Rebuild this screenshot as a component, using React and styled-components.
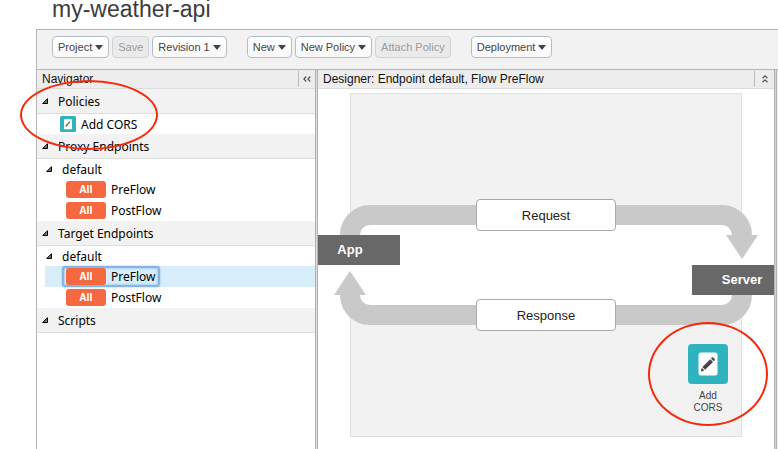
import React from 'react';
import styled, { createGlobalStyle, css } from 'styled-components';

const GlobalStyle = createGlobalStyle`
  * { box-sizing: border-box; }
  html, body, #root { height: 100%; }
  body {
    margin: 0;
    background: #fff;
    color: #000;
    font-family: "Liberation Sans", Arial, sans-serif;
    font-size: 12px;
    overflow: hidden;
  }
  button { margin: 0; font: inherit; color: inherit; cursor: pointer; }
  ul { margin: 0; padding: 0; list-style: none; }
`;

const Page = styled.div`
  position: relative;
  display: flex;
  flex-direction: column;
  min-height: 100%;
`;

const Title = styled.h1`
  margin: 0;
  height: 29px;
  padding-left: 52px;
  font-size: 23px;
  font-weight: 400;
  line-height: 18px;
  color: #3c3c3c;
`;

const Editor = styled.main`
  flex: 1;
  display: flex;
  flex-direction: column;
  margin-left: 36px;
  border-top: 1px solid #b5b5b5;
  border-left: 1px solid #b5b5b5;
`;

const Toolbar = styled.div`
  display: flex;
  gap: 20px;
  height: 40px;
  padding: 6px 15px;
  background: #f2f2f2;
  border-bottom: 1px solid #b5b5b5;
`;

const ButtonGroup = styled.div`
  display: flex;
  align-items: flex-start;
  gap: 3px;
`;

const ToolButton = styled.button`
  display: flex;
  align-items: center;
  gap: 3px;
  height: 22px;
  padding: 0 5px;
  white-space: nowrap;
  font-size: 11px;
  color: #444;
  background: linear-gradient(#fff, #f8f8f8);
  border: 1px solid #b3bfc6;
  border-radius: 4px;

  &:disabled {
    color: #9b9b9b;
    background: #eaeaea;
    border-color: #cdd3d6;
    cursor: default;
  }
`;

const Panels = styled.div`
  flex: 1;
  display: flex;
`;

const Panel = styled.section`
  display: flex;
  flex-direction: column;
  background: #fff;
  ${(p) => (p.$side ? css`flex: 0 0 278px;` : css`flex: 1; min-width: 0;`)}
`;

const Splitter = styled.div`
  flex: 0 0 3px;
  background: ${(p) => (p.$accent ? '#cfe0ae' : '#dedede')};
  border: solid #b0b0b0;
  border-width: 0 1px;
`;

const EdgePanel = styled.div`
  flex: 0 0 1px;
  background: #f2f2f2;
`;

const PanelHeader = styled.header`
  display: flex;
  align-items: center;
  height: 19px;
  padding-left: 5px;
  background: #ededed;
  border-bottom: 1px solid #dcdcdc;
`;

const PanelTitle = styled.h2`
  flex: 1;
  margin: 0;
  font-size: 12px;
  line-height: 16px;
  font-weight: 400;
  color: #111;
  white-space: nowrap;
`;

const CollapseButton = styled.button`
  display: flex;
  align-items: center;
  justify-content: center;
  width: ${(p) => (p.$wide ? '20px' : '17px')};
  height: 16px;
  padding: 0;
  color: #555;
  background: none;
  border: 0;
  border-left: 1px solid #b3bfc6;
`;

const Tree = styled.div`
  font-family: "Noto Sans", "Open Sans", sans-serif;
  font-size: 12px;
  line-height: 16px;
`;

const TreeLabel = styled.span`
  padding-top: 2px;
`;

const SectionToggle = styled.button`
  display: flex;
  align-items: center;
  gap: 10px;
  width: 100%;
  height: 25px;
  padding: 0 5px;
  background: #f2f2f2;
  border: 0;
  border-bottom: 1px solid #dfdfdf;
`;

const EndpointToggle = styled.button`
  display: flex;
  align-items: center;
  gap: 10px;
  width: 100%;
  height: 20px;
  padding: 0 9px;
  background: none;
  border: 0;
`;

const PolicyRow = styled.button`
  display: flex;
  align-items: center;
  gap: 5px;
  width: 100%;
  height: 20px;
  padding: 0 23px;
  background: none;
  border: 0;
`;

const FlowRow = styled.li`
  display: flex;
  align-items: center;
  height: 21px;
  margin-left: 8px;
  padding-left: 17px;
  background: ${(p) => (p.$selected ? '#d7eefa' : 'transparent')};
`;

const FlowButton = styled.button`
  display: flex;
  align-items: center;
  gap: 5px;
  height: 21px;
  padding: 0 2px;
  background: none;
  border: 2px solid transparent;
  border-radius: 3px;
  ${(p) => p.$selected && css`
    border-color: #86b5e4;
    box-shadow: 0 0 2px #86b5e4, inset 0 0 3px #86b5e4;
  `}
`;

const Badge = styled.span`
  width: 40px;
  height: 17px;
  border-radius: 3px;
  background: #f56840;
  color: #fff;
  font-size: 10px;
  font-weight: 700;
  line-height: 17px;
  text-align: center;
`;

const Designer = styled.div`
  position: relative;
  flex: 1;
  padding: 4px 32px 12px;
`;

const Canvas = styled.div`
  height: 344px;
  background: #f2f2f2;
  border: 1px solid #dfdfdf;
`;

const Loop = styled.div`
  position: absolute;
  top: 116px;
  left: 22px;
  right: 22px;
  height: 120px;
  background: #fff;
  border: 20px solid #c9c9c9;
  border-radius: 30px;
`;

const ArrowHead = styled.svg`
  position: absolute;
  top: 146px;
  width: 32px;
  height: 60px;
  background: linear-gradient(#fff, #fff) no-repeat;
  background-size: 32px 30px;
  ${(p) => (p.$end ? css`right: 16px;` : css`left: 16px; background-position: 0 30px;`)}
`;

const Terminal = styled.div`
  position: absolute;
  width: 82px;
  height: 30px;
  background: #686868;
  color: #fff;
  font-size: 13px;
  font-weight: 700;
  line-height: 30px;
  text-align: center;
  ${(p) => (p.$end
    ? css`top: 176px; right: 0; padding-left: 18px;`
    : css`top: 146px; left: 0; padding-right: 18px;`)}
`;

const Stage = styled.button`
  position: absolute;
  top: ${(p) => (p.$response ? '210px' : '110px')};
  left: calc(50% - 70px);
  width: 140px;
  height: 32px;
  padding: 0;
  background: #fff;
  border: 1px solid #a9a9a9;
  border-radius: 4px;
  color: #222;
  font-size: 13px;
`;

const PolicyNode = styled.button`
  position: absolute;
  top: 255px;
  right: 46px;
  display: flex;
  flex-direction: column;
  align-items: center;
  gap: 6px;
  width: 40px;
  padding: 0;
  background: none;
  border: 0;
  color: #444;
  font-size: 10px;
  line-height: 12px;
`;

const Callout = styled.div`
  position: absolute;
  border: 2px solid #f32b0c;
  border-radius: 50%;
  pointer-events: none;
  ${(p) => (p.$policies
    ? css`top: 80px; left: 20px; width: 138px; height: 70px;`
    : css`top: 322px; right: 10px; width: 120px; height: 104px;`)}
`;

const Caret = () => (
  <svg width="8" height="5" viewBox="0 0 8 5" aria-hidden="true">
    <path d="M0 0H8L4 5Z" fill="#444" />
  </svg>
);

const Twisty = () => (
  <svg width="6" height="6" viewBox="0 0 6 6" aria-hidden="true">
    <path d="M5.5 0.7V5.5H0.7Z" fill="#777" stroke="#000" />
  </svg>
);

const PolicyIcon = ({ size, small }) => (
  <svg width={size} height={size} viewBox="0 0 40 40" aria-hidden="true">
    <rect width="40" height="40" rx="4" fill="#2fb3bf" />
    {small ? (
      <>
        <rect x="10" y="8" width="20" height="25" rx="2" fill="#fff" />
        <path d="M14 26L25 14" stroke="#555" strokeWidth="3" />
      </>
    ) : (
      <>
        <rect x="10.5" y="8.5" width="19" height="23" rx="2.5" fill="#fff" />
        <g fill="#444">
          <path d="M12.8 27.4L13.8 23.8L16.4 26.4Z" />
          <path d="M14.4 23.1L22.3 15.2L25 17.9L17.1 25.8Z" />
          <path d="M23 14.5L24 13.5Q24.7 13 25.3 13.5L26.7 14.9Q27.2 15.5 26.7 16.2L25.7 17.2Z" />
        </g>
      </>
    )}
  </svg>
);

const ChevronsLeft = () => (
  <svg width="8" height="6" viewBox="0 0 8 6" fill="none" stroke="currentColor" strokeWidth="1.2" aria-hidden="true">
    <path d="M3.2 .5L.9 3L3.2 5.5M7.2 .5L4.9 3L7.2 5.5" />
  </svg>
);

const ChevronsUp = () => (
  <svg width="6" height="8" viewBox="0 0 6 8" fill="none" stroke="currentColor" strokeWidth="1.2" aria-hidden="true">
    <path d="M.5 3.2L3 .9L5.5 3.2M.5 7.2L3 4.9L5.5 7.2" />
  </svg>
);

const MenuButton = ({ children }) => (
  <ToolButton type="button" aria-haspopup="menu">{children}<Caret /></ToolButton>
);

const Section = ({ name, children }) => (
  <section>
    <SectionToggle type="button" aria-expanded="true">
      <Twisty /><TreeLabel>{name}</TreeLabel>
    </SectionToggle>
    {children}
  </section>
);

const Endpoint = ({ selected }) => (
  <>
    <EndpointToggle type="button" aria-expanded="true">
      <Twisty /><TreeLabel>default</TreeLabel>
    </EndpointToggle>
    <ul>
      {['PreFlow', 'PostFlow'].map((flow) => (
        <FlowRow key={flow} $selected={flow === selected}>
          <FlowButton type="button" $selected={flow === selected}>
            <Badge>All</Badge>{flow}
          </FlowButton>
        </FlowRow>
      ))}
    </ul>
  </>
);

export default function App() {
  return (
    <Page>
      <GlobalStyle />
      <Title>my-weather-api</Title>
      <Editor>
        <Toolbar>
          <ButtonGroup>
            <MenuButton>Project</MenuButton>
            <ToolButton type="button" disabled>Save</ToolButton>
            <MenuButton>Revision 1</MenuButton>
          </ButtonGroup>
          <ButtonGroup>
            <MenuButton>New</MenuButton>
            <MenuButton>New Policy</MenuButton>
            <ToolButton type="button" disabled>Attach Policy</ToolButton>
          </ButtonGroup>
          <ButtonGroup>
            <MenuButton>Deployment</MenuButton>
          </ButtonGroup>
        </Toolbar>
        <Panels>
          <Panel $side>
            <PanelHeader>
              <PanelTitle>Navigator</PanelTitle>
              <CollapseButton type="button" aria-label="Collapse navigator"><ChevronsLeft /></CollapseButton>
            </PanelHeader>
            <Tree>
              <Section name="Policies">
                <PolicyRow type="button">
                  <PolicyIcon size={16} small /><TreeLabel>Add CORS</TreeLabel>
                </PolicyRow>
              </Section>
              <Section name="Proxy Endpoints"><Endpoint /></Section>
              <Section name="Target Endpoints"><Endpoint selected="PreFlow" /></Section>
              <Section name="Scripts" />
            </Tree>
          </Panel>
          <Splitter />
          <Panel>
            <PanelHeader>
              <PanelTitle>Designer: Endpoint default, Flow PreFlow</PanelTitle>
              <CollapseButton type="button" $wide aria-label="Collapse designer"><ChevronsUp /></CollapseButton>
            </PanelHeader>
            <Designer>
              <Canvas />
              <Loop />
              <ArrowHead viewBox="0 0 32 60" aria-hidden="true">
                <path d="M16 36L32 60H0Z" fill="#c9c9c9" />
              </ArrowHead>
              <ArrowHead $end viewBox="0 0 32 60" aria-hidden="true">
                <path d="M0 0H32L16 24Z" fill="#c9c9c9" />
              </ArrowHead>
              <Terminal>App</Terminal>
              <Terminal $end>Server</Terminal>
              <Stage type="button">Request</Stage>
              <Stage type="button" $response>Response</Stage>
              <PolicyNode type="button"><PolicyIcon size={40} /><span>Add CORS</span></PolicyNode>
            </Designer>
          </Panel>
          <Splitter $accent />
          <EdgePanel />
        </Panels>
      </Editor>
      <Callout $policies />
      <Callout />
    </Page>
  );
}
